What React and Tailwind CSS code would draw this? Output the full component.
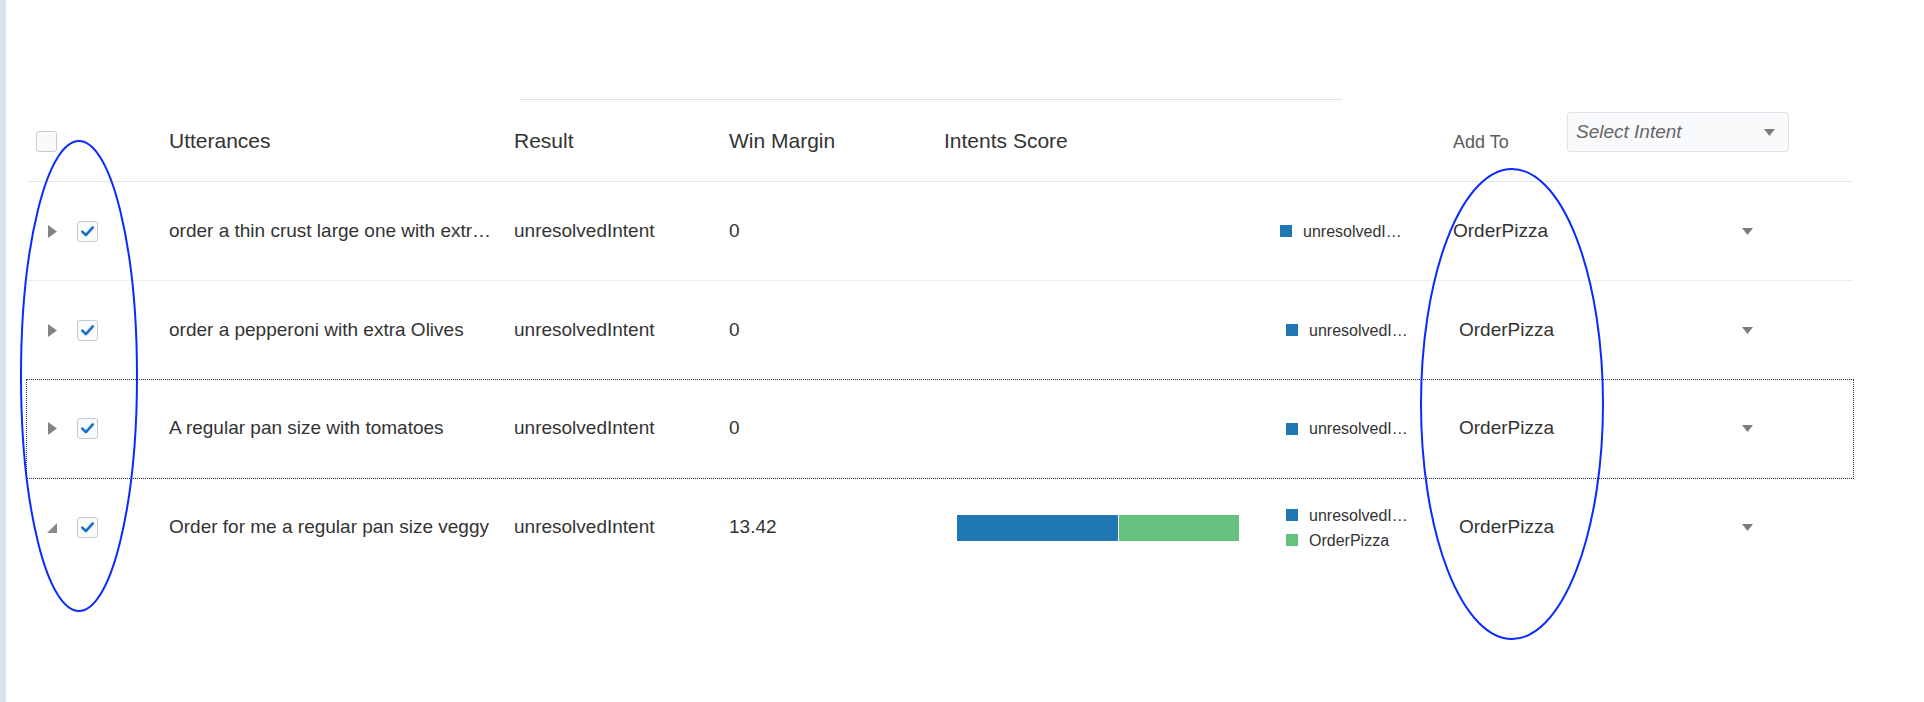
import React from 'react';

const rows = [
  {
    text: 'order a thin crust large one with extra Cheese and onions',
    margin: '0',
    open: false,
    shift: true,
    legend: [{ name: 'unresolvedIntent', color: 'bg-[#1f78b4]' }],
  },
  {
    text: 'order a pepperoni with extra Olives',
    margin: '0',
    open: false,
    legend: [{ name: 'unresolvedIntent', color: 'bg-[#1f78b4]' }],
  },
  {
    text: 'A regular pan size with tomatoes',
    margin: '0',
    open: false,
    focused: true,
    legend: [{ name: 'unresolvedIntent', color: 'bg-[#1f78b4]' }],
  },
  {
    text: 'Order for me a regular pan size veggy',
    margin: '13.42',
    open: true,
    bar: true,
    last: true,
    legend: [
      { name: 'unresolvedIntent', color: 'bg-[#1f78b4]' },
      { name: 'OrderPizza', color: 'bg-[#65c17e]' },
    ],
  },
];

const Caret = ({ className = '' }) => (
  <svg width="11" height="7" viewBox="0 0 11 7" className={className}>
    <polygon points="0,0 11,0 5.5,7" fill="#7d7d7d" />
  </svg>
);

const Checkbox = ({ checked }) => (
  <div className="flex h-[21px] w-[21px] shrink-0 items-center justify-center rounded-[3px] border border-[#c5cbd1] bg-[#f8fafc]">
    {checked && (
      <svg width="15" height="15" viewBox="0 0 15 15">
        <polyline
          points="2.3,7.6 5.9,11.2 12.8,3.4"
          fill="none"
          stroke="#1670c6"
          strokeWidth="2.6"
          strokeLinecap="round"
          strokeLinejoin="round"
        />
      </svg>
    )}
  </div>
);

const Expander = ({ open }) =>
  open ? (
    <svg width="10" height="10" viewBox="0 0 10 10" className="ml-[20px] shrink-0">
      <polygon points="10,0 10,10 0,10" fill="#8a8a8a" />
    </svg>
  ) : (
    <svg width="9" height="13" viewBox="0 0 9 13" className="ml-[21px] shrink-0">
      <polygon points="0,0 9,6.5 0,13" fill="#848484" />
    </svg>
  );

const Row = ({ row }) => (
  <div
    className={`flex items-center text-[19px] ${
      row.last ? 'h-[99px]' : 'border-b border-[#eceef1]'
    } ${row.focused ? 'h-[98px] outline outline-1 outline-dotted outline-[#3a3a3a]' : 'h-[99px]'}`}
  >
    {/* expander + checkbox */}
    <div className="flex w-[142px] shrink-0 items-center">
      <Expander open={row.open} />
      <div className="ml-[20px]">
        <Checkbox checked />
      </div>
    </div>

    <div className="w-[345px] shrink-0 pr-[20px]">
      <div className="truncate">{row.text}</div>
    </div>
    <div className="w-[215px] shrink-0">unresolvedIntent</div>
    <div className="w-[215px] shrink-0">{row.margin}</div>

    {/* intents score bar */}
    <div className={`${row.shift ? 'w-[336px]' : 'w-[342px]'} shrink-0`}>
      {row.bar && (
        <div className="ml-[13px] flex h-[26px] w-[282px] gap-px">
          <div className="w-[161px] bg-[#1f78b4]" />
          <div className="flex-1 bg-[#65c17e]" />
        </div>
      )}
    </div>

    {/* legend */}
    <div className="flex w-[173px] shrink-0 flex-col text-[16px] leading-[25px]">
      {row.legend.map(item => (
        <div key={item.name} className="flex items-center">
          <div className={`h-[12px] w-[12px] shrink-0 ${item.color}`} />
          <div className="ml-[11px] w-[100px] truncate">{item.name}</div>
        </div>
      ))}
    </div>

    {/* add to */}
    <div className={`${row.shift ? 'w-[289px]' : 'w-[283px]'} shrink-0`}>OrderPizza</div>
    <Caret />
  </div>
);

export default function App() {
  return (
    <div className="relative flex min-h-screen w-full bg-white font-['Liberation_Sans',Arial,sans-serif] text-[#333]">
      <div className="w-[6px] shrink-0 bg-[#dce3e8]" />

      <div className="flex-1">
        <div className="ml-[514px] mt-[99px] h-px w-[822px] bg-[#dde2e7]" />

        <div className="ml-[21px] w-[1826px]">
          {/* header */}
          <div className="flex h-[82px] items-center border-b border-[#e3e6ea] pt-px text-[21px]">
            <div className="w-[142px] shrink-0 pl-[9px]">
              <Checkbox checked={false} />
            </div>
            <div className="w-[345px] shrink-0">Utterances</div>
            <div className="w-[215px] shrink-0">Result</div>
            <div className="w-[215px] shrink-0">Win Margin</div>
            <div className="w-[509px] shrink-0">Intents Score</div>
            <div className="w-[114px] shrink-0 pt-[2px] text-[18px] text-[#5b5b5b]">Add To</div>
            <div className="mt-[11px] flex h-[40px] w-[222px] shrink-0 items-center justify-between self-start rounded-[3px] border border-[#dfe3e7] bg-[#f8fafc] pl-[8px] pr-[13px]">
              <span className="text-[19px] italic text-[#666]">Select Intent</span>
              <Caret />
            </div>
          </div>

          {rows.map(row => (
            <Row key={row.text} row={row} />
          ))}
        </div>
      </div>

      {/* hand-drawn annotation ovals */}
      <svg
        className="pointer-events-none absolute left-0 top-0"
        width="1924"
        height="702"
        viewBox="0 0 1924 702"
      >
        <ellipse cx="79" cy="376" rx="58" ry="235" fill="none" stroke="#0a2bff" strokeWidth="2" />
        <ellipse cx="1512" cy="404" rx="91" ry="235" fill="none" stroke="#0a2bff" strokeWidth="2" />
      </svg>
    </div>
  );
}
